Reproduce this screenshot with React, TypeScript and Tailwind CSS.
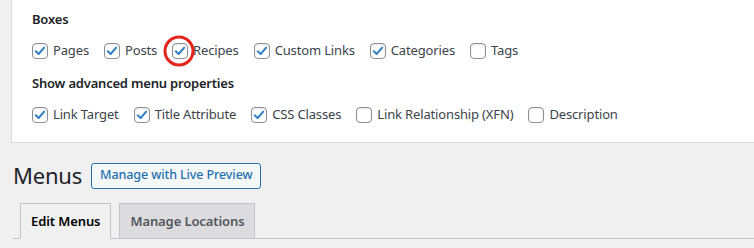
import React from "react";

const boxes = [
  { label: "Pages", checked: true },
  { label: "Posts", checked: true },
  { label: "Recipes", checked: true, circled: true },
  { label: "Custom Links", checked: true },
  { label: "Categories", checked: true },
  { label: "Tags", checked: false },
];

const advanced = [
  { label: "Link Target", checked: true },
  { label: "Title Attribute", checked: true },
  { label: "CSS Classes", checked: true },
  { label: "Link Relationship (XFN)", checked: false },
  { label: "Description", checked: false },
];

function Checkbox({ checked, circled }: { checked: boolean; circled?: boolean }) {
  return (
    <span className="relative flex h-4 w-4 shrink-0 items-center justify-center rounded-[4px] border border-[#8c8f94] bg-white shadow-[inset_0_1px_2px_rgba(0,0,0,0.1)]">
      {checked && (
        <svg viewBox="0 0 16 16" className="h-[14px] w-[14px]">
          <path
            d="M3.2 8.4 L6.4 11.4 L12.8 4.2"
            fill="none"
            stroke="#3582c4"
            strokeWidth="2.4"
            strokeLinecap="round"
            strokeLinejoin="round"
          />
        </svg>
      )}
      {circled && (
        <span className="pointer-events-none absolute left-[calc(50%-1px)] top-1/2 h-[31px] w-[31px] -translate-x-1/2 -translate-y-1/2 rounded-full border-[3px] border-[#e3261c]" />
      )}
    </span>
  );
}

function Row({ items }: { items: { label: string; checked: boolean; circled?: boolean }[] }) {
  return (
    <div className="flex h-6 items-center">
      {items.map((it) => (
        <label
          key={it.label}
          className="mr-[15px] flex items-center gap-[5px] text-[13px] tracking-[-0.15px] text-[#3c434a]"
        >
          <Checkbox checked={it.checked} circled={it.circled} />
          <span>{it.label}</span>
        </label>
      ))}
    </div>
  );
}

export default function App() {
  return (
    <div className="h-[248px] w-[754px] overflow-hidden bg-[#f0f0f1] font-['Noto_Sans',sans-serif]">
      <div className="ml-[11px] border-b border-l border-[#dcdcde] bg-white pb-[15px] pl-[20px] pt-[9px]">
        <div className="text-[13px] font-semibold leading-5 tracking-[-0.2px] text-[#1d2327]">Boxes</div>
        <div className="mt-[10px]">
          <Row items={boxes} />
        </div>
        <div className="mt-[10px] text-[13px] font-semibold leading-5 tracking-[-0.2px] text-[#1d2327]">
          Show advanced menu properties
        </div>
        <div className="mt-[10px]">
          <Row items={advanced} />
        </div>
      </div>

      <div className="ml-[13px] mt-[18px] flex items-center">
        <h1 className="text-[22px] leading-[29px] tracking-[-0.2px] text-[#1d2327]">Menus</h1>
        <button className="ml-[9px] h-[26px] rounded-[3px] border border-[#2271b1] bg-[#f6f7f7] px-[8px] text-[12.5px] font-medium tracking-[-0.1px] text-[#2271b1]">
          Manage with Live Preview
        </button>
      </div>

      <div className="ml-[13px] mt-[13px] flex gap-2 border-b border-[#c3c4c7] pl-[7px]">
        <div className="-mb-px border border-[#c3c4c7] border-b-[#f0f0f1] bg-[#f0f0f1] px-[10px] py-[5px] text-[13px] font-semibold leading-6 tracking-[-0.1px] text-black">
          Edit Menus
        </div>
        <div className="-mb-px border border-[#c3c4c7] bg-[#dcdcde] px-[10px] py-[5px] text-[13px] font-semibold leading-6 tracking-[-0.1px] text-[#50575e]">
          Manage Locations
        </div>
      </div>
    </div>
  );
}
